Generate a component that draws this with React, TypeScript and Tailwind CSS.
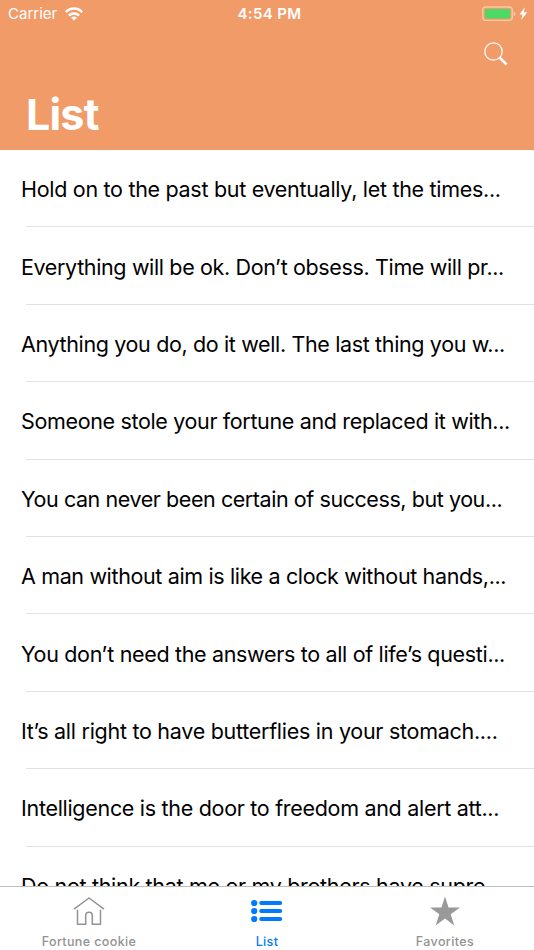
import type { ReactNode } from "react";

const fortunes = [
  { text: "Hold on to the past but eventually, let the times...", tracking: "tracking-[-0.3px]" },
  { text: "Everything will be ok. Don’t obsess. Time will pr...", tracking: "tracking-[-0.36px]" },
  { text: "Anything you do, do it well. The last thing you w...", tracking: "tracking-[-0.36px]" },
  { text: "Someone stole your fortune and replaced it with...", tracking: "tracking-[-0.35px]" },
  { text: "You can never been certain of success, but you...", tracking: "tracking-[-0.43px]" },
  { text: "A man without aim is like a clock without hands,...", tracking: "tracking-[-0.36px]" },
  { text: "You don’t need the answers to all of life’s questi...", tracking: "tracking-[-0.33px]" },
  { text: "It’s all right to have butterflies in your stomach....", tracking: "tracking-[-0.28px]" },
  { text: "Intelligence is the door to freedom and alert att...", tracking: "tracking-[-0.3px]" },
  { text: "Do not think that me or my brothers have supre", tracking: "tracking-[-0.31px]" },
];

const WifiIcon = () => (
  <svg width="18" height="14" viewBox="0 0 18 14" fill="none" stroke="white" strokeWidth="2.5">
    <path d="M.9 5.2C5.4 .4 12.6 .4 17.1 5.2" />
    <path d="M4 8.5C6.8 5.7 11.2 5.7 14 8.5" />
    <path d="M9 13.5L6.1 10.7Q9 8.3 11.9 10.7Z" fill="white" stroke="none" />
  </svg>
);

const BatteryIcon = () => (
  <svg width="46" height="16" viewBox="0 0 46 16">
    <rect x=".8" y="1" width="29.4" height="13.4" rx="3" fill="none" stroke="#f9c9aa" strokeWidth="1.4" />
    <rect x="3" y="3" width="25.2" height="9.6" rx="1.2" fill="#4cd964" />
    <path d="M31.7 5.3Q33.5 6 33.5 7.7T31.7 10.1Z" fill="#f9c9aa" />
    <path d="M42.8 1.2L37.4 8.5H40.6L39.2 14L45.2 6.3H41.8Z" fill="white" />
  </svg>
);

const SearchIcon = () => (
  <svg width="24" height="24" viewBox="0 0 24 24" fill="none" stroke="white">
    <circle cx="9.5" cy="9.5" r="8.7" strokeWidth="1.3" />
    <path d="M15.7 15.7L22.6 22.5" strokeWidth="2.5" />
  </svg>
);

const HomeIcon = () => (
  <svg width="32" height="30" viewBox="0 0 32 30" fill="none" stroke="#929292" strokeWidth="1.5" strokeLinejoin="round">
    <path d="M1 13.1L16 2L31 13.1" />
    <path d="M4.5 13.7V28.2H12.7V19.5Q12.7 16.3 16 16.3T19.3 19.5V28.2H27.5V13.7" />
  </svg>
);

const ListIcon = () => (
  <svg width="32" height="30" viewBox="0 0 32 30" fill="#007aff">
    {[7, 15, 23].map((y) => (
      <g key={y}>
        <circle cx="3.2" cy={y} r="3.1" />
        <rect x="8.2" y={y - 2} width="23" height="4" rx="2" />
      </g>
    ))}
  </svg>
);

const StarIcon = () => (
  <svg width="32" height="30" viewBox="0 0 32 30" fill="#999999">
    <path d="M16 .4L19.5 11.5H31L21.7 18.3L25.3 29.4L16 22.5L6.7 29.4L10.3 18.3L1 11.5H12.5Z" />
  </svg>
);

const Tab = ({ label, active, children }: { label: string; active?: boolean; children: ReactNode }) => (
  <button className={`flex flex-1 flex-col items-center pt-[9px] ${active ? "text-[#007aff]" : "text-[#929292]"}`}>
    {children}
    <span className="mt-2 text-[12.5px] leading-4 font-medium tracking-[0.38px]">{label}</span>
  </button>
);

export default function App() {
  return (
    <div className="flex h-[950px] w-[534px] flex-col overflow-hidden bg-white font-['Inter','Liberation_Sans',sans-serif]">
      <header className="h-[150px] shrink-0 bg-[#f19b68] text-white">
        <div className="grid h-7 grid-cols-3 items-center pl-2 pr-[6px]">
          <div className="flex items-center gap-2 text-[15px] leading-7">
            <span>Carrier</span>
            <WifiIcon />
          </div>
          <span className="pl-[3px] text-center text-[15px] font-semibold tracking-[0.35px]">4:54 PM</span>
          <div className="flex justify-end">
            <BatteryIcon />
          </div>
        </div>
        <div className="mt-[14px] flex justify-end pr-[26px]">
          <SearchIcon />
        </div>
        <h1 className="mt-[23px] pl-[26px] text-[43px] leading-[50px] font-bold tracking-[-0.8px]">List</h1>
      </header>

      <main className="min-h-0 flex-1 overflow-hidden">
        {fortunes.map(({ text, tracking }) => (
          <div key={text} className="flex h-[77.4px] flex-col">
            <p className={`flex flex-1 items-center whitespace-nowrap pt-[2.4px] pl-[21px] text-[21.5px] text-black ${tracking}`}>
              {text}
            </p>
            <div className="ml-[26px] h-px shrink-0 bg-[#e2e2e4]" />
          </div>
        ))}
      </main>

      {/* Tab bar */}
      <nav className="flex h-16 shrink-0 border-t border-[#bdbdbd] bg-white">
        <Tab label="Fortune cookie">
          <HomeIcon />
        </Tab>
        <Tab label="List" active>
          <ListIcon />
        </Tab>
        <Tab label="Favorites">
          <StarIcon />
        </Tab>
      </nav>
    </div>
  );
}
